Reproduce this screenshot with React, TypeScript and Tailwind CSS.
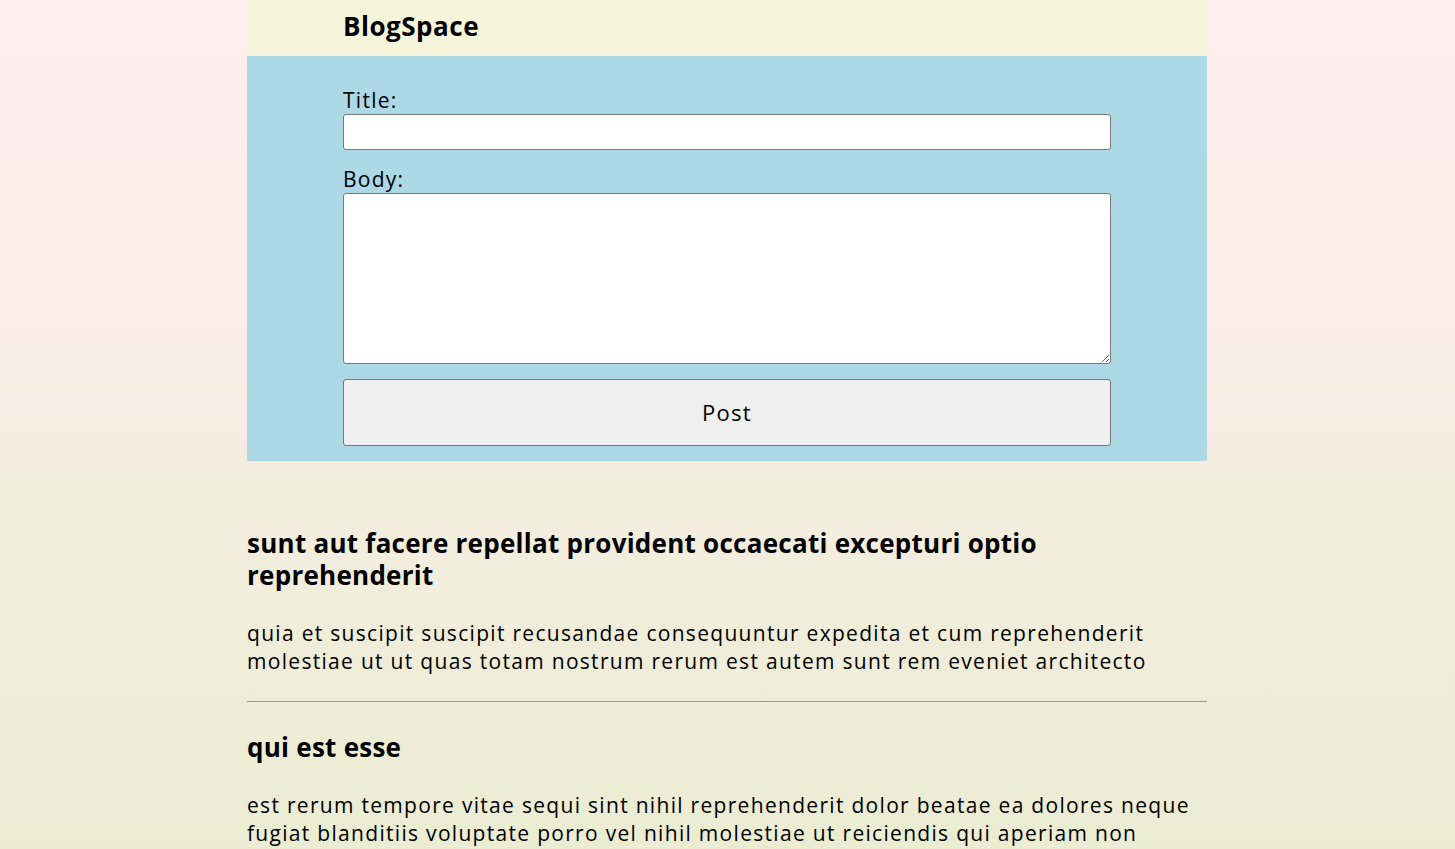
const posts = [
  {
    id: 1,
    title: "sunt aut facere repellat provident occaecati excepturi optio reprehenderit",
    body: "quia et suscipit suscipit recusandae consequuntur expedita et cum reprehenderit molestiae ut ut quas totam nostrum rerum est autem sunt rem eveniet architecto",
  },
  {
    id: 2,
    title: "qui est esse",
    body: "est rerum tempore vitae sequi sint nihil reprehenderit dolor beatae ea dolores neque fugiat blanditiis voluptate porro vel nihil molestiae ut reiciendis qui aperiam non debitis possimus qui neque nisi nulla",
  },
];

export default function App() {
  return (
    <div className="min-h-screen bg-fixed bg-gradient-to-b from-[#ffeeee] to-[#ebedd3] font-['Open_Sans',sans-serif] text-black">
      <div className="ml-[247px] w-[960px]">
        <header className="flex h-14 items-center bg-[#f5f5dc] px-24 pb-1">
          <h1 className="text-[26px] font-bold tracking-[0.02em]">BlogSpace</h1>
        </header>

        <form className="flex flex-col bg-[#add8e6] px-24 pt-[30px] pb-[15px]" onSubmit={(e) => e.preventDefault()}>
          <label htmlFor="title" className="text-[21px] leading-[28px] tracking-[0.06em]">Title:</label>
          <input
            id="title"
            type="text"
            className="h-9 w-full rounded-[3px] border border-[#767676] bg-white"
          />
          <label htmlFor="body" className="mt-[15px] text-[21px] leading-[28px] tracking-[0.06em]">Body:</label>
          <textarea
            id="body"
            className="h-[171px] w-full rounded-[3px] border border-[#767676] bg-white"
          />
          <button
            type="submit"
            className="mt-[15px] h-[67px] w-full rounded-[3px] border border-[#767676] bg-[#efefef] text-[22px] tracking-[0.06em]"
          >
            Post
          </button>
        </form>

        <main className="pt-[66px]">
          {posts.map((post, i) => (
            <article key={post.id}>
              {i > 0 ? <hr className="mt-[26px] border-t border-[#999]" /> : null}
              <h2 className={`${i > 0 ? "mt-[29px]" : ""} text-[26px] font-bold leading-[32px] tracking-[0.01em]`}>
                {post.title}
              </h2>
              <p className="mt-[28px] text-[21px] leading-[28px] tracking-[0.062em]">{post.body}</p>
            </article>
          ))}
        </main>
      </div>
    </div>
  );
}
